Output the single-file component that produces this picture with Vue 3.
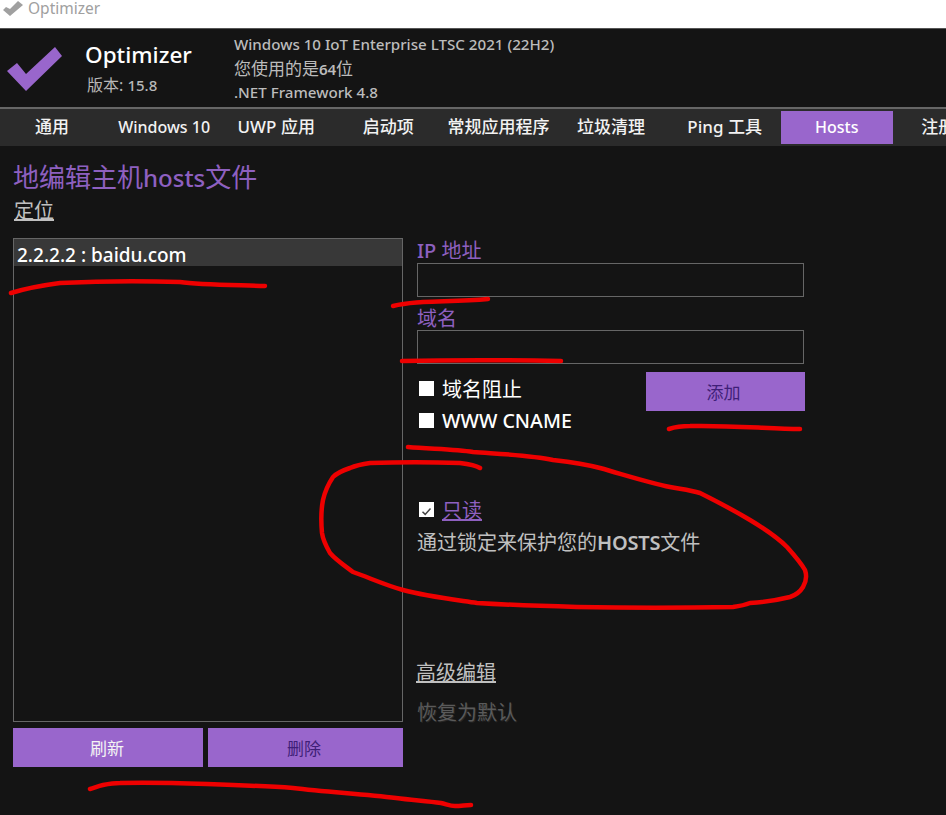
<script setup>
const tabs = ['通用', 'Windows 10', 'UWP 应用', '启动项', '常规应用程序', '垃圾清理', 'Ping 工具', 'Hosts', '注册表']
const strokes = [
  'M11 293 C30 287 45 285 60 283 C100 281 150 281 180 282 C200 285 240 285 265 286',
  'M393 306 C405 303 412 303 423 302 C445 301 465 301 488 299',
  'M402 361 C450 360 510 360 561 361',
  'M669 429 C675 427 682 426 690 426 C730 425 770 429 800 429',
  'M408 447 C430 449 455 449 473 452 C500 454 530 455 553 460 C570 462 585 464 600 468 C625 475 650 483 670 487 C680 489 690 490 700 493 C718 502 735 511 750 520 C765 529 777 537 787 547 C795 556 801 563 805 570 C807 576 806 582 803 587 C800 592 796 595 790 597 C778 600 765 602 750 603 C745 605 740 606 733 607 C680 608 630 608 577 607 C540 606 510 605 477 603 C450 599 425 596 403 590 C385 585 370 578 353 572 C345 566 336 560 330 553 C326 546 323 540 322 533 C321 522 321 510 323 500 C325 491 329 483 333 477 C338 472 344 470 350 468 C357 465 363 464 370 463 C400 462 430 462 460 463 C468 464 475 465 480 468',
  'M90 789 C94 788 98 786 103 785 C108 784 113 783 120 783 C149 782 178 783 207 784 C236 785 264 786 293 788 C327 792 362 794 396 798 C411 800 426 801 441 803 C446 804 450 806 455 806 C461 806 466 805 471 805'
]
</script>

<template>
  <div class="app">
    <div class="titlebar">
      <svg class="title-icon" width="20" height="16" viewBox="0 0 20 16">
        <polygon points="0,9 3,6 7,8 15,0 20,4 7,15" fill="#a0a0a0" />
      </svg>
      <span>Optimizer</span>
    </div>

    <header class="header">
      <svg class="logo" width="56" height="46" viewBox="0 0 56 46">
        <polygon points="0,25 10,17 19,28 48,1 55,10 19,45" fill="#9966cc" />
      </svg>
      <div class="brand">
        <div class="brand-name">Optimizer</div>
        <div class="brand-version">版本: <b class="latin">15.8</b></div>
      </div>
      <div class="info">
        <div class="latin">Windows 10 IoT Enterprise LTSC 2021 (22H2)</div>
        <div class="info-cjk">您使用的是<b class="strong info-num">64</b>位</div>
        <div class="latin">.NET Framework 4.8</div>
      </div>
    </header>

    <nav class="tabs">
      <div v-for="tab in tabs" :key="tab" class="tab" :class="{ active: tab === 'Hosts' }">{{ tab }}</div>
    </nav>

    <main class="content">
      <h1 class="heading">地编辑主机<span class="heading-latin">hosts</span>文件</h1>
      <a class="locate">定位</a>
      <div class="columns">
        <section class="left">
          <div class="list">
            <div class="list-item">2.2.2.2 : baidu.com</div>
          </div>
          <div class="list-actions">
            <button class="btn refresh">刷新</button>
            <button class="btn remove">删除</button>
          </div>
        </section>
        <section class="right">
          <label class="field-label first"><b class="latin">IP</b> 地址</label>
          <div class="input"></div>
          <label class="field-label second">域名</label>
          <div class="input"></div>
          <div class="options">
            <div class="checks">
              <div class="check-row"><span class="box"></span><span>域名阻止</span></div>
              <div class="check-row"><span class="box"></span><b class="latin cname">WWW CNAME</b></div>
            </div>
            <button class="btn add">添加</button>
          </div>
          <div class="readonly">
            <span class="box">
              <svg width="15" height="15" viewBox="0 0 15 15">
                <path d="M3.5 7.8 L6.2 10.4 L11.5 4.6" fill="none" stroke="#444" stroke-width="1.5" />
              </svg>
            </span>
            <a class="readonly-link">只读</a>
          </div>
          <p class="desc">通过锁定来保护您的<b class="strong">HOSTS</b>文件</p>
          <a class="advanced">高级编辑</a>
          <div class="restore">恢复为默认</div>
        </section>
      </div>
    </main>

    <svg class="ink" width="946" height="815" viewBox="0 0 946 815">
      <path v-for="(d, i) in strokes" :key="i" :d="d" fill="none" stroke="#ee0000" stroke-width="4.5" stroke-linecap="round" stroke-linejoin="round" />
    </svg>
  </div>
</template>

<style scoped>
.app {
  position: relative;
  width: 946px;
  height: 815px;
  overflow: hidden;
  background: #141414;
  color: #c4c4c4;
  font-family: "Noto Sans", "Noto Sans CJK SC", sans-serif;
}
.latin { font-weight: 500; }
.strong { font-weight: 600; letter-spacing: -0.2px; }
.titlebar {
  display: flex;
  align-items: flex-start;
  gap: 5px;
  height: 28px;
  box-sizing: border-box;
  padding: 0 0 0 3px;
  background: #fff;
  color: #a0a0a0;
  font-size: 15.5px;
  line-height: 17px;
}
.title-icon { margin-top: 1px; }
.header {
  display: flex;
  align-items: flex-start;
  height: 81px;
  box-sizing: border-box;
  border-top: 1px solid #555;
  border-bottom: 2px solid #666;
  background: #141414;
}
.logo { margin: 17px 0 0 7px; flex: none; }
.brand { margin: 11px 0 0 22px; width: 149px; flex: none; }
.brand-name { font-size: 22.5px; line-height: 30px; color: #fff; font-weight: 500; }
.brand-version { font-size: 16px; line-height: 24px; color: #b8b8b8; margin: 3px 0 0 2px; }
.brand-version .latin { font-size: 15px; }
.info { margin-top: 3px; font-size: 15.15px; line-height: 24px; color: #bcbcbc; white-space: nowrap; }
.info-cjk { font-size: 17px; line-height: 25px; height: 24px; }
.info-num { font-size: 15.15px; }
.tabs {
  display: flex;
  height: 37px;
  margin-left: -4px;
  background: #2b2b2b;
  align-items: center;
  width: 1100px;
}
.tab {
  flex: none;
  width: 112.1px;
  height: 33px;
  line-height: 32px;
  text-align: center;
  font-size: 17px;
  color: #f2f2f2;
  font-weight: 500;
  white-space: nowrap;
  box-sizing: border-box;
}
.tab:nth-child(2), .tab:nth-child(8) { font-size: 16px; }
.tab:nth-child(5) { padding-right: 4px; }
.tab:nth-child(6) { padding-right: 3px; }
.tab:nth-child(9) { padding-right: 4px; }
.tab.active { background: #9966cc; color: #fff; }
.content { padding: 14px 0 0 13px; }
.heading {
  margin: 0;
  font-size: 26px;
  line-height: 34px;
  font-weight: 400;
  color: #8e60c0;
}
.heading-latin { font-weight: 500; font-size: 24px; }
.locate {
  display: block;
  width: fit-content;
  margin: 2px 0 0 1px;
  font-size: 20px;
  line-height: 28px;
  text-decoration: underline;
  color: #c0c0c0;
}
.columns { display: flex; gap: 13px; margin-top: 13px; }
.left { width: 390px; flex: none; }
.list {
  height: 484px;
  box-sizing: border-box;
  border: 1px solid #666;
}
.list-item {
  height: 27px;
  line-height: 32px;
  padding-left: 3px;
  background: #383838;
  color: #fff;
  font-size: 19px;
  font-weight: 500;
}
.list-actions { display: flex; gap: 5px; margin-top: 6px; }
.btn {
  border: 0;
  padding: 0;
  background: #9966cc;
  font-family: inherit;
  font-size: 17px;
  height: 39px;
}
.refresh { width: 190px; color: #f4f4f4; padding-right: 2px; }
.remove { width: 195px; color: #3f1f78; padding-right: 3px; }
.right { width: 392px; flex: none; padding-left: 1px; box-sizing: border-box; }
.field-label { display: block; font-size: 20px; color: #8e60c0; line-height: 26px; }
.first { height: 25px; }
.second { margin-top: 9px; height: 24px; }
.input {
  width: 387px;
  height: 34px;
  box-sizing: border-box;
  border: 1px solid #666;
}
.options { display: flex; justify-content: space-between; margin-top: 8px; width: 388px; }
.check-row {
  display: flex;
  align-items: center;
  gap: 8px;
  height: 32px;
  margin-left: 2px;
  font-size: 20px;
  color: #fff;
}
.cname { font-size: 19.6px; }
.add { width: 159px; color: #3f1f78; padding-right: 4px; }
.box {
  display: block;
  flex: none;
  width: 15px;
  height: 15px;
  background: #fff;
}
.readonly { display: flex; align-items: center; gap: 8px; margin: 57px 0 0 2px; height: 32px; }
.readonly-link { font-size: 20px; color: #8e60c0; text-decoration: underline; }
.desc { margin: 4px 0 0; font-size: 20px; line-height: 28px; color: #c0c0c0; }
.advanced {
  display: block;
  width: fit-content;
  margin-top: 102px;
  font-size: 20px;
  line-height: 28px;
  margin-left: -1px;
  color: #c0c0c0;
  text-decoration: underline;
}
.restore {
  margin-top: 12px;
  font-size: 20px;
  line-height: 28px;
  color: #5a5a5a;
  text-shadow: 1px 1px 0 #262626;
}
.ink { position: absolute; left: 0; top: 0; pointer-events: none; }
</style>
